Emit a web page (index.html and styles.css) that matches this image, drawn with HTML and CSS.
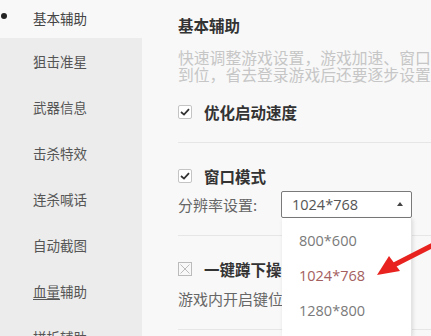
FILE: index.html
```html
<!DOCTYPE html>
<html lang="zh-CN">
<head>
<meta charset="utf-8">
<title>基本辅助</title>
<link rel="stylesheet" href="styles.css">
</head>
<body>
<div class="app">
  <nav class="sidebar">
    <div class="nav-item active"><span class="dot"></span>基本辅助</div>
    <div class="nav-item">狙击准星</div>
    <div class="nav-item">武器信息</div>
    <div class="nav-item">击杀特效</div>
    <div class="nav-item">连杀喊话</div>
    <div class="nav-item">自动截图</div>
    <div class="nav-item"><span class="ul">血量</span>辅助</div>
    <div class="nav-item">拼拆辅助</div>
  </nav>
  <main class="main">
    <h1 class="title">基本辅助</h1>
    <p class="desc">快速调整游戏设置，游戏加速、窗口模式一键设置</p>
    <p class="desc">到位，省去登录游戏后还要逐步设置的麻烦</p>
    <div class="option first">
      <span class="check on"><svg width="10" height="8" viewBox="0 0 10 8"><path d="M1 4 L4 6.6 L9 1.2" fill="none" stroke="#333" stroke-width="1.8"/></svg></span>
      <span class="opt-label">优化启动速度</span>
    </div>
    <div class="sep sep1"></div>
    <div class="option second">
      <span class="check on"><svg width="10" height="8" viewBox="0 0 10 8"><path d="M1 4 L4 6.6 L9 1.2" fill="none" stroke="#333" stroke-width="1.8"/></svg></span>
      <span class="opt-label">窗口模式</span>
    </div>
    <div class="res-row">
      <span class="res-label">分辨率设置:</span>
      <div class="select">
        <span class="sel-value">1024*768</span>
        <span class="caret"></span>
        <ul class="dropdown">
          <li>800*600</li>
          <li class="picked">1024*768</li>
          <li>1280*800</li>
        </ul>
      </div>
    </div>
    <div class="sep sep2"></div>
    <div class="option third">
      <span class="check off"><svg width="14" height="14" viewBox="0 0 14 14"><rect x="0.5" y="0.5" width="13" height="13" fill="none" stroke="#bbb"/><path d="M2.5 2.5 L11.5 11.5 M11.5 2.5 L2.5 11.5" stroke="#bbb" stroke-width="1"/></svg></span>
      <span class="opt-label">一键蹲下操作</span>
    </div>
    <p class="hint">游戏内开启键位设置后即可使用</p>
    <div class="sep sep3"></div>
  </main>
  <svg class="annot" width="70" height="50" viewBox="0 0 70 50">
    <path d="M70 6 L23 30" stroke="#e8231f" stroke-width="5" stroke-linecap="round"/>
    <polygon points="8,39 20,20 31,35" fill="#e8231f"/>
  </svg>
</div>
</body>
</html>
```
FILE: styles.css
```css
* { box-sizing: border-box; }
html, body { margin: 0; padding: 0; }
body {
  width: 431px;
  height: 336px;
  overflow: hidden;
  background: #f8f8f8;
  font-family: "Noto Sans CJK SC", "Noto Sans", sans-serif;
}
.app {
  position: relative;
  display: flex;
  height: 336px;
  overflow: hidden;
}
.sidebar {
  width: 142px;
  flex-shrink: 0;
  background: #ececec;
  overflow: hidden;
}
.nav-item {
  position: relative;
  height: 46px;
  line-height: 46px;
  padding-left: 33px;
  font-size: 13.5px;
  color: #555;
  white-space: nowrap;
}
.nav-item.active {
  height: 38px;
  line-height: 36px;
  background: #f8f8f8;
  color: #444;
}
.dot {
  position: absolute;
  left: 1px;
  top: 13px;
  width: 6px;
  height: 6px;
  border-radius: 50%;
  background: #222;
}
.ul { text-decoration: underline; text-underline-offset: 2px; }
.main {
  flex: 1;
  min-width: 0;
  overflow: hidden;
  padding-left: 36px;
  padding-top: 15px;
}
.title {
  margin: 0;
  font-size: 15.5px;
  line-height: 20px;
  font-weight: bold;
  color: #333;
}
.desc {
  margin: 0;
  font-size: 15.8px;
  line-height: 17px;
  color: #c6c6c6;
  white-space: nowrap;
}
.title + .desc { margin-top: 14px; }
.option {
  display: flex;
  align-items: center;
  height: 20px;
  white-space: nowrap;
}
.option.first { margin-top: 19px; }
.option.second { margin-top: 23px; }
.option.third { margin-top: 23px; }
.check {
  width: 14px;
  height: 14px;
  margin-right: 12px;
  display: flex;
  align-items: center;
  justify-content: center;
  flex-shrink: 0;
}
.check.on {
  border: 1px solid #c4c4c4;
  border-radius: 2px;
  background: #fff;
}
.opt-label {
  font-size: 15.5px;
  font-weight: bold;
  color: #333;
}
.sep {
  height: 1px;
  background: #e6e6e6;
}
.sep1 { margin-top: 20px; }
.sep2 { margin-top: 17px; }
.sep3 { margin-top: 20px; }
.res-row {
  display: flex;
  align-items: center;
  margin-top: 5px;
}
.res-label {
  width: 103px;
  font-size: 15px;
  color: #666;
  white-space: nowrap;
}
.select {
  position: relative;
  width: 131px;
  height: 27px;
  border: 1px solid #7a7a7a;
  border-radius: 2px;
  background: #fff;
  display: flex;
  align-items: center;
  padding-left: 10px;
}
.sel-value {
  font-family: "Open Sans", "Noto Sans", sans-serif;
  font-size: 14.5px;
  color: #555;
}
.caret {
  position: absolute;
  right: 8px;
  top: 10px;
  width: 0;
  height: 0;
  border-left: 3.5px solid transparent;
  border-right: 3.5px solid transparent;
  border-bottom: 4px solid #444;
}
.dropdown {
  position: absolute;
  left: 0;
  top: 26px;
  width: 130px;
  height: 118px;
  margin: 0;
  padding: 5px 0 0;
  list-style: none;
  background: #fff;
  box-shadow: 1px 1px 4px rgba(0,0,0,0.12);
  border-right: 1px solid #e4e4e4;
  z-index: 2;
}
.dropdown li {
  height: 35px;
  line-height: 35px;
  padding-left: 17px;
  font-family: "Open Sans", "Noto Sans", sans-serif;
  font-size: 14.5px;
  color: #7a7a7a;
}
.dropdown li.picked { color: #a4605e; }
.hint {
  margin: 10px 0 0;
  font-size: 15px;
  line-height: 20px;
  color: #666;
  white-space: nowrap;
}
.annot {
  position: absolute;
  left: 369px;
  top: 236px;
  z-index: 5;
}
```
